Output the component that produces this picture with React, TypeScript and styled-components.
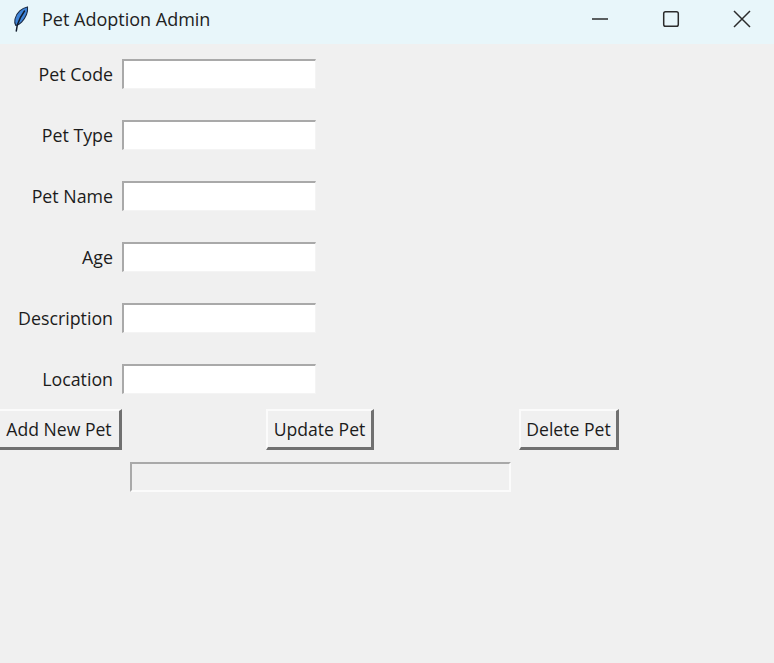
import React from "react";
import styled, { createGlobalStyle } from "styled-components";

const Global = createGlobalStyle`
  html, body { margin: 0; padding: 0; background: #f0f0f0; overflow: hidden; }
  * { box-sizing: border-box; }
`;

const Window = styled.div`
  width: 774px;
  height: 663px;
  background: #f0f0f0;
  font-family: "Open Sans", "Noto Sans", sans-serif;
  color: #1c1c1c;
  overflow: hidden;
`;

const TitleBar = styled.header`
  height: 44px;
  background: #e8f6fa;
  display: flex;
  align-items: center;
  padding: 0 0 6px 13px;
`;

const AppIcon = styled.svg`
  width: 18px;
  height: 26px;
  flex: none;
`;

const Title = styled.h1`
  margin: 0 0 0 11px;
  flex: 1;
  font-size: 18px;
  font-weight: 400;
  color: #222;
`;

const Controls = styled.div`
  display: flex;
  align-items: center;
  margin-right: -3px;
`;

const ControlButton = styled.div`
  width: 71px;
  height: 38px;
  display: flex;
  align-items: center;
  justify-content: center;
  svg { display: block; }
`;

const Form = styled.main`
  display: flex;
  flex-direction: column;
  gap: 31px;
  padding-top: 15px;
`;

const Row = styled.div`
  display: grid;
  grid-template-columns: 113px 194px;
  column-gap: 9px;
  align-items: center;
  height: 30px;
`;

const Label = styled.label`
  text-align: right;
  font-size: 17.8px;
  line-height: 30px;
  white-space: nowrap;
`;

const Field = styled.input`
  width: 194px;
  height: 30px;
  padding: 0 4px;
  background: #ffffff;
  border-style: solid;
  border-width: 2px 1px 1px 2px;
  border-color: #a9a9a9 #f4f4f4 #f4f4f4 #a9a9a9;
  outline: none;
`;

const Actions = styled.div`
  display: flex;
  margin: 15px 0 0 -3px;
  height: 41px;
`;

const Action = styled.button<{ $width: number; $gap: number }>`
  width: ${(p) => p.$width}px;
  margin-left: ${(p) => p.$gap}px;
  height: 41px;
  padding: 0;
  background: #f0f0f0;
  font-family: inherit;
  font-size: 17.6px;
  color: #1c1c1c;
  border-style: solid;
  border-width: 2px 3px 3px 2px;
  border-color: #fbfbfb #707070 #707070 #fbfbfb;
  white-space: nowrap;
`;

const Status = styled.input`
  display: block;
  width: 381px;
  height: 30px;
  margin: 12px 0 0 130px;
  background: #f0f0f0;
  border-style: solid;
  border-width: 2px;
  border-color: #a9a9a9 #fbfbfb #fbfbfb #a9a9a9;
  outline: none;
`;

const fields = ["Pet Code", "Pet Type", "Pet Name", "Age", "Description", "Location"];

export default function App() {
  return (
    <Window>
      <Global />
      <TitleBar>
        <AppIcon viewBox="0 0 18 26">
          <path d="M14.500 1C9 2 3.500 6.500 2 13c-.5 2.500-.2 5 .8 6.500C6.500 19 11 14.500 13.500 8.500c1-2.500 1.300-5.200 1-7.500z" fill="#3f84d8" stroke="#1c2c44" strokeWidth="1.100" />
          <path d="M11.500 5C8.500 9 6 14 4.300 19L3.300 25" fill="none" stroke="#101a2a" strokeWidth="1.500" strokeLinecap="round" />
        </AppIcon>
        <Title>Pet Adoption Admin</Title>
        <Controls>
          <ControlButton>
            <svg width="18" height="18" viewBox="0 0 18 18"><path d="M1 9h16" stroke="#2b2b2b" strokeWidth="1.500" /></svg>
          </ControlButton>
          <ControlButton>
            <svg width="18" height="18" viewBox="0 0 18 18"><rect x="1.700" y="1.700" width="14.600" height="14.600" rx="1.800" fill="none" stroke="#2b2b2b" strokeWidth="1.500" /></svg>
          </ControlButton>
          <ControlButton>
            <svg width="18" height="18" viewBox="0 0 18 18"><path d="M1 1l16 16M17 1L1 17" stroke="#2b2b2b" strokeWidth="1.500" /></svg>
          </ControlButton>
        </Controls>
      </TitleBar>
      <Form>
        {fields.map((f) => (
          <Row key={f}>
            <Label>{f}</Label>
            <Field />
          </Row>
        ))}
      </Form>
      <Actions>
        <Action $width={125} $gap={0}>Add New Pet</Action>
        <Action $width={108} $gap={144}>Update Pet</Action>
        <Action $width={100} $gap={145}>Delete Pet</Action>
      </Actions>
      <Status />
    </Window>
  );
}
